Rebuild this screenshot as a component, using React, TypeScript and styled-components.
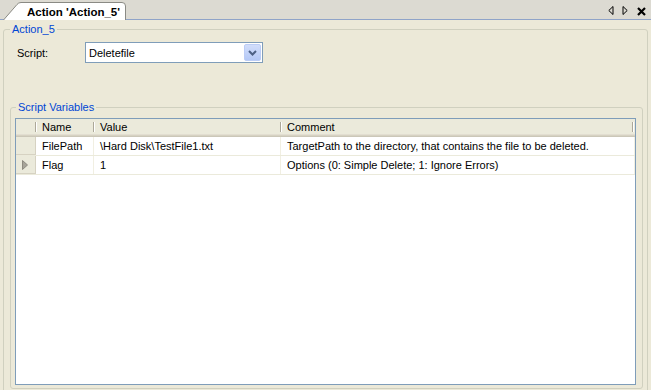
import React from 'react';
import styled, { createGlobalStyle } from 'styled-components';

type Variable = {
  name: string;
  value: string;
  comment: string;
  current?: boolean;
};

const variables: Variable[] = [
  {
    name: 'FilePath',
    value: '\\Hard Disk\\TestFile1.txt',
    comment: 'TargetPath to the directory, that contains the file to be deleted.',
  },
  {
    name: 'Flag',
    value: '1',
    comment: 'Options (0: Simple Delete; 1: Ignore Errors)',
    current: true,
  },
];

const GlobalStyle = createGlobalStyle`
  html, body {
    margin: 0;
    padding: 0;
    background: #ece9d8;
  }
  body {
    font-family: "Liberation Sans", Arial, sans-serif;
    font-size: 11px;
    color: #000;
  }
`;

export default function App() {
  return (
    <>
      <GlobalStyle />
      <Window>
        <TabStrip>
          <Tab>
            <TabShape viewBox="0 0 123 18" preserveAspectRatio="none">
              <path
                d="M0.5 18 L14 2.5 Q15.5 0.5 18 0.5 L119 0.5 Q122.5 0.5 122.5 4 L122.5 18"
                fill="#fff"
                stroke="#8a8a84"
              />
            </TabShape>
            <TabLabel>Action 'Action_5'</TabLabel>
          </Tab>
          <StripButtons>
            <StripButton viewBox="0 0 6 9" width={6} height={9}>
              <path d="M5 0.5 L0.8 4.5 L5 8.5 Z" fill="none" stroke="#000" />
            </StripButton>
            <StripButton viewBox="0 0 6 9" width={6} height={9}>
              <path d="M1 0.5 L5.2 4.5 L1 8.5 Z" fill="none" stroke="#000" />
            </StripButton>
            <CloseIcon viewBox="0 0 9 9" width={9} height={9}>
              <path d="M1 1 L8 8 M8 1 L1 8" stroke="#000" strokeWidth={2.2} />
            </CloseIcon>
          </StripButtons>
        </TabStrip>

        <Content>
          <GroupBox $padLeft={6} $padRight={4} $padBottom={8}>
            <Legend>Action_5</Legend>
            <ScriptRow>
              <FieldLabel>Script:</FieldLabel>
              <Combo>
                <ComboText>Deletefile</ComboText>
                <ComboButton>
                  <svg viewBox="0 0 9 6" width={9} height={6}>
                    <path d="M1 1 L4.5 4.5 L8 1" fill="none" stroke="#4d6185" strokeWidth={2} />
                  </svg>
                </ComboButton>
              </Combo>
            </ScriptRow>

            <VariablesBox $padLeft={4} $padRight={6} $padBottom={3}>
              <Legend $shift={1}>Script Variables</Legend>
              <Grid>
                <HeaderRow>
                  <HeaderCell />
                  <HeaderCell>Name</HeaderCell>
                  <HeaderCell>Value</HeaderCell>
                  <HeaderCell>Comment</HeaderCell>
                </HeaderRow>
                {variables.map((v) => (
                  <Row key={v.name}>
                    <RowHeader>
                      {v.current && (
                        <svg viewBox="0 0 6 10" width={6} height={10}>
                          <path d="M0.5 0.5 L5.5 5 L0.5 9.5 Z" fill="#a8a59a" stroke="#8e8b80" />
                        </svg>
                      )}
                    </RowHeader>
                    <Cell>{v.name}</Cell>
                    <Cell>{v.value}</Cell>
                    <Cell>{v.comment}</Cell>
                  </Row>
                ))}
              </Grid>
            </VariablesBox>
          </GroupBox>
        </Content>
      </Window>
    </>
  );
}

const columns = '20px 58px 187px 1fr';

const Window = styled.div`
  width: 651px;
  height: 390px;
  overflow: hidden;
  display: flex;
  flex-direction: column;
  background: #ece9d8;
`;

const TabStrip = styled.div`
  height: 19px;
  flex: none;
  display: flex;
  align-items: flex-end;
  justify-content: space-between;
  background: #dcdad2;
  border-bottom: 1px solid #8fa3c8;
  padding-left: 3px;
`;

const Tab = styled.div`
  position: relative;
  width: 123px;
  height: 18px;
  margin-bottom: -1px;
  display: flex;
  align-items: center;
  justify-content: flex-end;
  padding-right: 6px;
  box-sizing: border-box;
`;

const TabShape = styled.svg`
  position: absolute;
  inset: 0;
  width: 100%;
  height: 100%;
`;

const TabLabel = styled.span`
  position: relative;
  font-weight: bold;
  font-size: 11.5px;
  line-height: 14px;
  padding-top: 1px;
`;

const StripButtons = styled.div`
  align-self: center;
  display: flex;
  align-items: center;
  gap: 8px;
  padding-right: 5px;
  padding-top: 1px;
`;

const StripButton = styled.svg`
  display: block;
`;

const CloseIcon = styled.svg`
  display: block;
  margin-left: 1px;
  margin-top: 3px;
`;

const Content = styled.div`
  flex: 1;
  padding: 3px 3px 0 3px;
`;

const GroupBox = styled.fieldset<{ $padLeft: number; $padRight: number; $padBottom: number }>`
  margin: 0;
  min-width: 0;
  border: 1px solid #d0d0bf;
  border-radius: 3px;
  padding: 0 ${({ $padRight }) => $padRight}px ${({ $padBottom }) => $padBottom}px
    ${({ $padLeft }) => $padLeft}px;
`;

const VariablesBox = styled(GroupBox)`
  margin-top: 38px;
`;

const Legend = styled.legend<{ $shift?: number }>`
  padding: 0 2px;
  margin-left: ${({ $shift }) => $shift ?? 0}px;
  color: #0046d5;
  font-size: 11px;
  line-height: 13px;
`;

const ScriptRow = styled.div`
  display: grid;
  grid-template-columns: 75px 178px;
  align-items: center;
  margin-top: 6px;
`;

const FieldLabel = styled.label`
  padding-left: 7px;
`;

const Combo = styled.div`
  height: 21px;
  box-sizing: border-box;
  border: 1px solid #7f9db9;
  background: #fff;
  display: flex;
  align-items: center;
  padding: 0 1px 0 3px;
`;

const ComboText = styled.span`
  flex: 1;
`;

const ComboButton = styled.div`
  width: 17px;
  height: 17px;
  box-sizing: border-box;
  border: 1px solid #bccdf6;
  border-radius: 2px;
  background: linear-gradient(#d2defb, #b4c8f6);
  display: flex;
  align-items: center;
  justify-content: center;
`;

const Grid = styled.div`
  margin-top: 4px;
  height: 267px;
  box-sizing: border-box;
  border: 1px solid #7f9db9;
  background: #fff;
`;

const HeaderRow = styled.div`
  display: grid;
  grid-template-columns: ${columns};
  height: 18px;
  background: #ebeadb;
  box-shadow: inset 0 -1px #cbc7b8, inset 0 -2px #d6d2c2, inset 0 -3px #e2ded1;
`;

const HeaderCell = styled.div`
  position: relative;
  display: flex;
  align-items: center;
  padding: 0 0 2px 6px;

  &:not(:last-child)::after {
    content: '';
    position: absolute;
    right: 0;
    top: 3px;
    bottom: 5px;
    width: 1px;
    background: #aca899;
    box-shadow: 1px 0 #fff;
  }

  &:last-child::after {
    content: '';
    position: absolute;
    right: 2px;
    top: 3px;
    bottom: 5px;
    width: 1px;
    background: #aca899;
    box-shadow: 1px 0 #fff;
  }
`;

const Row = styled.div`
  display: grid;
  grid-template-columns: ${columns};
  height: 19px;
  box-sizing: border-box;
  border-bottom: 1px solid #ebeadb;
`;

const RowHeader = styled.div`
  background: #ebeadb;
  border-right: 1px solid #d6d2c2;
  box-shadow: inset 0 -1px #d6d2c2;
  display: flex;
  align-items: center;
  padding-left: 6px;
`;

const Cell = styled.div`
  display: flex;
  align-items: center;
  padding-left: 6px;
  border-right: 1px solid #f1efe2;
  white-space: nowrap;
  overflow: hidden;
`;
